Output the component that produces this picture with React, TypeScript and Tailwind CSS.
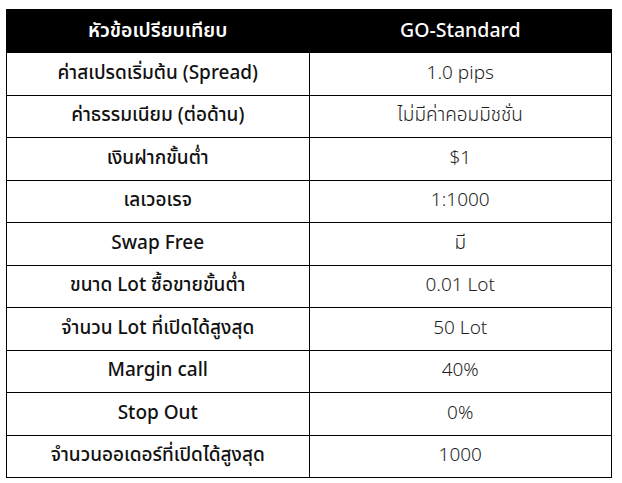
const rows: [string, string][] = [
  ["ค่าสเปรดเริ่มต้น (Spread)", "1.0 pips"],
  ["ค่าธรรมเนียม (ต่อด้าน)", "ไม่มีค่าคอมมิชชั่น"],
  ["เงินฝากขั้นต่ำ", "$1"],
  ["เลเวอเรจ", "1:1000"],
  ["Swap Free", "มี"],
  ["ขนาด Lot ซื้อขายขั้นต่ำ", "0.01 Lot"],
  ["จำนวน Lot ที่เปิดได้สูงสุด", "50 Lot"],
  ["Margin call", "40%"],
  ["Stop Out", "0%"],
  ["จำนวนออเดอร์ที่เปิดได้สูงสุด", "1000"],
];

export default function App() {
  return (
    <div
      className="min-h-screen bg-white pt-[9px] pl-[6px]"
      style={{ fontFamily: '"Noto Sans", "Noto Sans Thai", sans-serif' }}
    >
      <table className="w-[606px] border-collapse table-fixed text-[19px]">
        <thead>
          <tr className="h-[43px] bg-black text-white">
            <th className="w-1/2 border border-black text-[19.5px] font-semibold pb-[3px]">หัวข้อเปรียบเทียบ</th>
            <th className="w-1/2 border border-black text-[19.5px] font-medium pb-[3px]">GO-Standard</th>
          </tr>
        </thead>
        <tbody>
          {rows.map(([label, value]) => (
            <tr key={label} className="h-[42.5px]">
              <td className="border border-black text-center font-medium text-[#111] pb-[4px]">{label}</td>
              <td className="border border-black text-center font-light text-[#1f1f1f] pb-[4px]">{value}</td>
            </tr>
          ))}
        </tbody>
      </table>
    </div>
  );
}
